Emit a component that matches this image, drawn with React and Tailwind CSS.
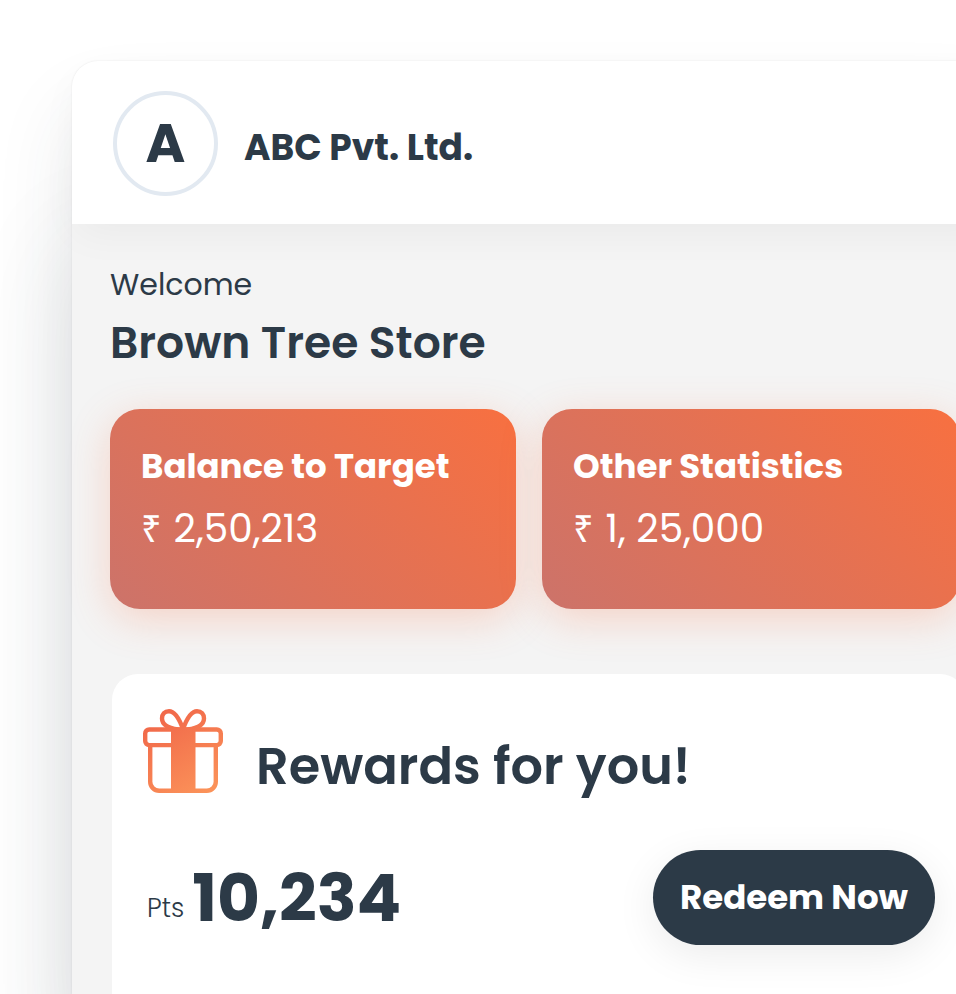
import React from "react";

const stats = [
  { title: "Balance to Target", value: "2,50,213" },
  { title: "Other Statistics", value: "1, 25,000" },
];

export default function App() {
  return (
    <div className="min-h-screen overflow-hidden bg-white pl-[72px] pt-[61px] flex flex-col font-[Poppins,Inter,sans-serif] text-[#2c3a47]">
      <div className="flex-1 flex flex-col -mr-[42px] rounded-tl-[26px] bg-[#f4f4f4] shadow-[0_0_2px_rgba(0,0,0,0.1),0_50px_80px_rgba(45,58,72,0.1),0_180px_100px_rgba(45,58,72,0.13)]">
        {/* HEADER */}
        <header className="h-[163px] flex items-center gap-[26px] rounded-tl-[26px] bg-white pl-[41px] pt-0.5 shadow-[0_14px_40px_-4px_rgba(0,0,0,0.045)]">
          <div className="size-[105px] rounded-full border-4 border-[#e2e9f1] flex items-center justify-center text-[54px] font-bold">
            A
          </div>
          <h1 className="pt-2 text-[36px] font-bold">ABC Pvt. Ltd.</h1>
        </header>

        <main className="flex-1 flex flex-col px-[38px] pt-[41px]">
          <p className="text-[30px] leading-10">Welcome</p>
          <h2 className="mt-2 text-[44px] leading-[60px] font-semibold">
            Brown Tree Store
          </h2>

          <div className="mt-9 grid grid-cols-[34fr_35fr] gap-[26px]">
            {stats.map((item) => (
              <StatCard key={item.title} {...item} />
            ))}
          </div>

          {/* REWARDS */}
          <section className="mt-[65px] ml-0.5 -mr-1.5 flex-1 rounded-t-[26px] bg-white px-[31px] pt-[35px]">
            <div className="flex items-start gap-[33px]">
              <GiftIcon />
              <h2 className="pt-[25px] text-[51px] leading-[64px] font-semibold">
                Rewards for you!
              </h2>
            </div>

            <div className="mt-[52px] flex items-center justify-between">
              <p className="flex items-end gap-2 pl-1">
                <span className="text-[26px] leading-[60px] font-light">
                  Pts
                </span>
                <span className="text-[66px] leading-[80px] font-bold">
                  10,234
                </span>
              </p>
              <button className="h-[95px] rounded-full bg-[#2c3a47] px-[27px] text-[34px] font-bold text-white shadow-[0_10px_40px_rgba(0,0,0,0.08)]">
                Redeem Now
              </button>
            </div>
          </section>
        </main>
      </div>
    </div>
  );
}

function StatCard({ title, value }) {
  return (
    <div className="h-[200px] rounded-[30px] bg-linear-45/srgb from-[#cc736a] to-[#f87040] px-[31px] pt-[34px] text-white shadow-[0_10px_40px_rgba(250,112,64,0.25)]">
      <h3 className="text-[34px] leading-[46px] font-bold">{title}</h3>
      <p className="mt-3 flex items-baseline gap-3 text-[39px] leading-[56px]">
        <span className="font-['Noto_Sans'] text-[36px]">₹</span>
        {value}
      </p>
    </div>
  );
}

function GiftIcon() {
  return (
    <svg
      className="w-20 h-[84px] shrink-0"
      viewBox="0 0 80 84"
      fill="none"
      stroke="url(#gift)"
      strokeWidth="4.4"
      aria-hidden="true"
    >
      <defs>
        <linearGradient
          id="gift"
          gradientUnits="userSpaceOnUse"
          x1="18"
          y1="8"
          x2="62"
          y2="84"
        >
          <stop stopColor="#f1694a" />
          <stop offset="1" stopColor="#fb9259" />
        </linearGradient>
      </defs>
      <rect x="2.2" y="20.5" width="75.6" height="15.6" rx="4" />
      <path d="M7.2 36v36.8a9 9 0 0 0 9 9h47.6a9 9 0 0 0 9-9V36" />
      <path d="M28 19h24.5v64H28z" fill="url(#gift)" stroke="none" />
      <path d="M40 20C36 9 31 2.2 26 2.2c-4.5 0-7 3.2-7 7.3 0 6.5 8 10.5 21 11.5Z" />
      <path d="M40 20C44 9 49 2.2 54 2.2c4.5 0 7 3.2 7 7.3 0 6.5-8 10.5-21 11.5Z" />
    </svg>
  );
}
